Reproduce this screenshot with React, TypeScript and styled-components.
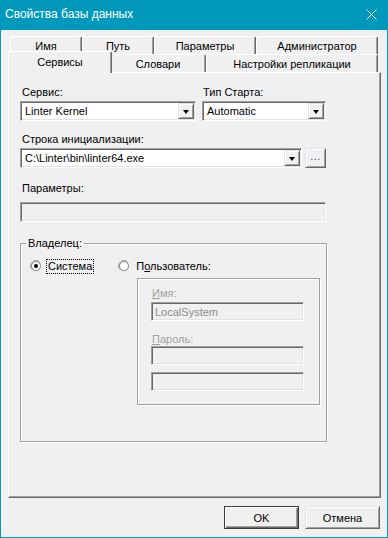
import styled, { createGlobalStyle, css } from "styled-components";

const TEAL = "#0099bc";

const GlobalStyle = createGlobalStyle`
  html, body { margin: 0; padding: 0; background: #f0f0f0; }
  body {
    font-family: "Liberation Sans", Arial, sans-serif;
    font-size: 11px;
    color: #000;
  }
  * { box-sizing: border-box; }
`;

const sunken = css`
  border: 1px solid;
  border-color: #a0a0a0 #fff #fff #a0a0a0;
  box-shadow: inset 1px 1px 0 #696969, inset -1px -1px 0 #e3e3e3;
`;

const raised = css`
  border: 1px solid;
  border-color: #e3e3e3 #696969 #696969 #e3e3e3;
  box-shadow: inset 1px 1px 0 #fff, inset -1px -1px 0 #a0a0a0;
`;

const etched = css`
  border: 1px solid #a0a0a0;
  box-shadow: inset 1px 1px 0 #fff, 1px 1px 0 #fff;
`;

const Window = styled.div`
  width: 388px;
  height: 538px;
  display: flex;
  flex-direction: column;
  background: #f0f0f0;
  border: 1px solid ${TEAL};
  border-top: none;
`;

const TitleBar = styled.div`
  height: 30px;
  margin: 0 -1px;
  flex: none;
  background: ${TEAL};
  color: #fff;
  font-size: 12px;
  display: flex;
  align-items: center;
  justify-content: space-between;
  padding: 0 11px 2px 5px;
`;

const Body = styled.div`
  flex: 1;
  display: flex;
  flex-direction: column;
  padding: 6px 6px 8px 7px;
`;

const TabRow = styled.div`
  display: flex;
  height: 18px;
  padding-left: 2px;
  flex: none;
`;

const Tab = styled.div<{ $w: number; $active?: boolean }>`
  width: ${(p) => p.$w}px;
  height: 18px;
  display: flex;
  align-items: center;
  justify-content: center;
  white-space: nowrap;
  background: #f0f0f0;
  border: 1px solid;
  border-bottom: none;
  border-color: #fff #696969 #696969 #fff;
  box-shadow: inset -1px 0 0 #a0a0a0;
  border-radius: 2px 2px 0 0;
  ${(p) =>
    p.$active &&
    css`
      width: ${p.$w + 4}px;
      height: 22px;
      margin: -3px -2px -1px -2px;
      padding-bottom: 2px;
      position: relative;
      z-index: 1;
    `}
`;

const Panel = styled.div`
  flex: 1;
  border: 1px solid;
  border-color: #fff #696969 #696969 #fff;
  box-shadow: inset -1px -1px 0 #a0a0a0;
  padding: 13px 0 0 11px;
  display: flex;
  flex-direction: column;
`;

const Section = styled.div<{ $mt?: number }>`
  margin-top: ${(p) => p.$mt ?? 0}px;
  width: 306px;
`;

const Grid = styled.div<{ $cols: string; $gap: number }>`
  display: grid;
  grid-template-columns: ${(p) => p.$cols};
  column-gap: ${(p) => p.$gap}px;
  align-items: end;
`;

const FieldLabel = styled.div<{ $mb?: number; $disabled?: boolean; $pl?: number }>`
  height: 13px;
  line-height: 13px;
  padding-left: ${(p) => p.$pl ?? 2}px;
  margin-bottom: ${(p) => p.$mb ?? 2}px;
  white-space: nowrap;
  color: ${(p) => (p.$disabled ? "#a0a0a0" : "#000")};
`;

const Combo = styled.div`
  ${sunken};
  height: 20px;
  background: #fff;
  display: flex;
  align-items: stretch;
  padding: 1px;
`;

const ComboValue = styled.div`
  flex: 1;
  display: flex;
  align-items: center;
  padding-left: 3px;
  white-space: nowrap;
  overflow: hidden;
`;

const DropButton = styled.div`
  ${raised};
  width: 16px;
  background: #f0f0f0;
  display: flex;
  align-items: center;
  justify-content: center;

  &::after {
    content: "";
    border-left: 3.5px solid transparent;
    border-right: 3.5px solid transparent;
    border-top: 4px solid #000;
    margin-top: 1px;
  }
`;

const SmallButton = styled.div`
  ${raised};
  height: 20px;
  background: #f0f0f0;
  display: flex;
  align-items: center;
  justify-content: center;
  padding-bottom: 4px;
  color: #5a4a8a;
  letter-spacing: 0.5px;
`;

const TextBox = styled.div<{ $h?: number; $w?: number }>`
  ${sunken};
  height: ${(p) => p.$h ?? 20}px;
  width: ${(p) => (p.$w ? `${p.$w}px` : "auto")};
  background: #f0f0f0;
  color: #8c8c8c;
  display: flex;
  align-items: center;
  padding-left: 3px;
`;

const Group = styled.div<{ $mt?: number; $ml?: number; $w: number; $h: number }>`
  ${etched};
  position: relative;
  width: ${(p) => p.$w}px;
  height: ${(p) => p.$h}px;
  margin-top: ${(p) => p.$mt ?? 0}px;
  margin-left: ${(p) => p.$ml ?? 0}px;
`;

const GroupTitle = styled.span`
  position: absolute;
  top: -7px;
  left: 5px;
  padding: 0 2px;
  line-height: 13px;
  background: #f0f0f0;
`;

const OwnerBody = styled.div`
  padding: 15px 0 0 9px;
  display: flex;
  flex-direction: column;
`;

const RadioRow = styled.div`
  display: flex;
  align-items: center;
  height: 14px;
`;

const RadioOption = styled.div<{ $mr?: number }>`
  display: flex;
  align-items: center;
  gap: 5px;
  margin-right: ${(p) => p.$mr ?? 0}px;
  white-space: nowrap;
`;

const RadioText = styled.span<{ $focused?: boolean }>`
  line-height: 13px;
  padding: 0 1px;
  outline: ${(p) => (p.$focused ? "1px dotted #000" : "none")};
  outline-offset: 0;
`;

const UserBox = styled.div`
  padding: 8px 0 0 13px;
  display: flex;
  flex-direction: column;
`;

const Footer = styled.div`
  display: flex;
  justify-content: flex-end;
  gap: 6px;
  margin-top: 8px;
  padding-right: 1px;
  flex: none;
`;

const DialogButton = styled.div<{ $default?: boolean; $w: number }>`
  ${raised};
  width: ${(p) => p.$w}px;
  height: 23px;
  display: flex;
  align-items: center;
  justify-content: center;
  background: #f0f0f0;
  ${(p) =>
    p.$default &&
    css`
      border-color: #3c3c3c;
      box-shadow: inset 1px 1px 0 #fff, inset -1px -1px 0 #696969, inset -2px -2px 0 #a0a0a0;
    `}
`;

const Radio = ({ checked }: { checked?: boolean }) => (
  <svg width="12" height="12" viewBox="0 0 12 12">
    <circle cx="6" cy="6" r="5.5" fill="#fff" stroke="#a0a0a0" />
    <path d="M1.8 9.6 A5.5 5.5 0 0 0 10.2 1.8" stroke="#fff" fill="none" />
    <circle cx="6" cy="6" r="4.5" fill="#fff" stroke="#696969" strokeWidth="0.8" />
    {checked && <circle cx="6" cy="6" r="2" fill="#000" />}
  </svg>
);

const Underlined = styled.span`
  text-decoration: underline;
  text-underline-offset: 1px;
`;

export default function App() {
  return (
    <>
      <GlobalStyle />
      <Window>
        <TitleBar>
          <span>Свойства базы данных</span>
          <svg width="11" height="11" viewBox="0 0 11 11">
            <path d="M0.5 0.5 L10.5 10.5 M10.5 0.5 L0.5 10.5" stroke="#fff" strokeWidth="1" />
          </svg>
        </TitleBar>
        <Body>
          <TabRow>
            <Tab $w={72}>Имя</Tab>
            <Tab $w={72}>Путь</Tab>
            <Tab $w={102}>Параметры</Tab>
            <Tab $w={122}>Администратор</Tab>
          </TabRow>
          <TabRow>
            <Tab $w={100} $active>
              Сервисы
            </Tab>
            <Tab $w={96}>Словари</Tab>
            <Tab $w={172}>Настройки репликации</Tab>
          </TabRow>
          <Panel>
            <Section>
              <Grid $cols="176px 124px" $gap={6}>
                <div>
                  <FieldLabel>Сервис:</FieldLabel>
                  <Combo>
                    <ComboValue>Linter Kernel</ComboValue>
                    <DropButton />
                  </Combo>
                </div>
                <div>
                  <FieldLabel $pl={1}>Тип Старта:</FieldLabel>
                  <Combo>
                    <ComboValue>Automatic</ComboValue>
                    <DropButton />
                  </Combo>
                </div>
              </Grid>
            </Section>
            <Section $mt={12}>
              <FieldLabel>Строка инициализации:</FieldLabel>
              <Grid $cols="282px 21px" $gap={3}>
                <Combo>
                  <ComboValue>C:\Linter\bin\linter64.exe</ComboValue>
                  <DropButton />
                </Combo>
                <SmallButton>...</SmallButton>
              </Grid>
            </Section>
            <Section $mt={14}>
              <FieldLabel $mb={7}>Параметры:</FieldLabel>
              <TextBox />
            </Section>
            <Group $mt={21} $w={307} $h={199}>
              <GroupTitle>Владелец:</GroupTitle>
              <OwnerBody>
                <RadioRow>
                  <RadioOption $mr={25}>
                    <Radio checked />
                    <RadioText $focused>Система</RadioText>
                  </RadioOption>
                  <RadioOption>
                    <Radio />
                    <RadioText>
                      П<Underlined>о</Underlined>льзователь:
                    </RadioText>
                  </RadioOption>
                </RadioRow>
                <Group $mt={5} $ml={107} $w={183} $h={127}>
                  <UserBox>
                    <FieldLabel $disabled $pl={1}>
                      <Underlined>И</Underlined>мя:
                    </FieldLabel>
                    <TextBox $w={153} $h={19}>
                      LocalSystem
                    </TextBox>
                    <FieldLabel $disabled $pl={1} style={{ marginTop: 12, marginBottom: 0 }}>
                      <Underlined>П</Underlined>ароль:
                    </FieldLabel>
                    <TextBox $w={153} $h={19} />
                    <TextBox $w={153} $h={19} style={{ marginTop: 7 }} />
                  </UserBox>
                </Group>
              </OwnerBody>
            </Group>
          </Panel>
          <Footer>
            <DialogButton $default $w={75}>
              OK
            </DialogButton>
            <DialogButton $w={75}>Отмена</DialogButton>
          </Footer>
        </Body>
      </Window>
    </>
  );
}
